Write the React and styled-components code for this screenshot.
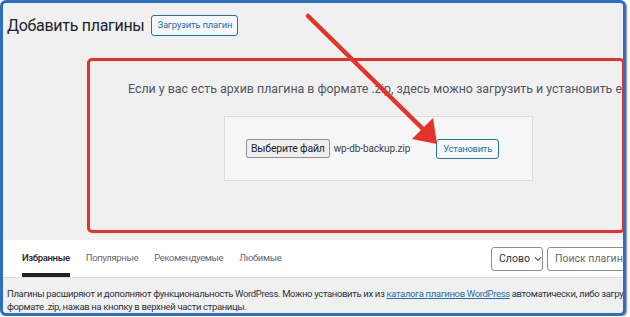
import React from 'react'
import styled, { createGlobalStyle } from 'styled-components'

const GlobalStyle = createGlobalStyle`
    html, body {
        margin: 0;
        padding: 0;
        background: #ffffff;
    }
    body {
        font-family: Roboto, "Noto Sans", sans-serif;
    }
`

const tabs = ['Избранные', 'Популярные', 'Рекомендуемые', 'Любимые']

function App() {
    return (
        <>
            <GlobalStyle />
            <Frame>
                <Header>
                    <Title>Добавить плагины</Title>
                    <OutlineButton>Загрузить плагин</OutlineButton>
                </Header>

                <UploadSection>
                    <UploadHint>
                        Если у вас есть архив плагина в формате .zip, здесь можно загрузить и установить его.
                    </UploadHint>
                    <UploadBox>
                        <FileButton>Выберите файл</FileButton>
                        <FileName>wp-db-backup.zip</FileName>
                        <OutlineButton $small>Установить</OutlineButton>
                    </UploadBox>
                </UploadSection>

                <TabBar>
                    <Tabs>
                        {tabs.map((t, i) => (
                            <Tab key={t} $active={i === 0}>{t}</Tab>
                        ))}
                    </Tabs>
                    <SearchControls>
                        <Select>
                            Слово
                            <svg width="9" height="6" viewBox="0 0 9 6">
                                <path d="M1 1l3.5 3.5L8 1" fill="none" stroke="#50575e" strokeWidth="1.3" />
                            </svg>
                        </Select>
                        <SearchInput>Поиск плагинов...</SearchInput>
                    </SearchControls>
                </TabBar>

                <Description>
                    <Line>
                        Плагины расширяют и дополняют функциональность WordPress. Можно установить их из{' '}
                        <Link>каталога плагинов WordPress</Link> автоматически, либо загрузить плагин в
                    </Line>
                    <Line>формате .zip, нажав на кнопку в верхней части страницы.</Line>
                </Description>

                {/* red annotation arrow drawn over the screenshot */}
                <Arrow width="630" height="317" viewBox="0 0 630 317">
                    <line x1="308" y1="16" x2="424" y2="130" stroke="#e5322b" strokeWidth="4.5" strokeLinecap="round" />
                    <polygon points="433,118 412,139 437,144" fill="#e5322b" />
                </Arrow>
            </Frame>
        </>
    )
}

const Frame = styled.div`
    position: relative;
    box-sizing: border-box;
    width: 626px;
    height: 316px;
    border: 3px solid #2b6fc0;
    border-radius: 6px;
    box-shadow: 1px 1px 2px rgba(0, 0, 0, 0.45);
    background: #f0f0f1;
    overflow: hidden;
    display: flex;
    flex-direction: column;

    & > * {
        flex-shrink: 0;
    }
`

const Header = styled.div`
    display: flex;
    align-items: center;
    gap: 7px;
    padding: 11px 0 0 4px;
    height: 22px;
`

const Title = styled.h1`
    margin: 0;
    font-size: 16px;
    letter-spacing: -0.3px;
    font-weight: 400;
    color: #1d2327;
`

const OutlineButton = styled.button`
    box-sizing: border-box;
    height: ${p => (p.$small ? '20px' : '21px')};
    padding: 0 ${p => (p.$small ? '6px' : '5px')};
    border: 1px solid #2271b1;
    border-radius: 3px;
    background: #f6f7f7;
    color: #2271b1;
    font-family: Roboto, sans-serif;
    font-size: 9.5px;
    letter-spacing: ${p => (p.$small ? '-0.3px' : '-0.2px')};
    line-height: 18px;
    white-space: nowrap;
`

const UploadSection = styled.div`
    box-sizing: border-box;
    margin: 22px -2px 0 84px;
    height: 175px;
    border: 3px solid #e5322b;
    border-radius: 5px;
    padding: 18px 0 0 38px;
`

const UploadHint = styled.p`
    margin: 0;
    font-size: 12.4px;
    line-height: 20px;
    color: #50575e;
    white-space: nowrap;
`

const UploadBox = styled.div`
    box-sizing: border-box;
    margin: 17px 0 0 96px;
    width: 309px;
    height: 65px;
    background: #f6f6f6;
    border: 1px solid #dcdcde;
    display: flex;
    align-items: center;
    padding-left: 21px;
    white-space: nowrap;
`

const FileButton = styled.span`
    box-sizing: border-box;
    height: 19px;
    padding: 0 4px;
    border: 1px solid #8c8f94;
    border-radius: 2px;
    background: #efefef;
    color: #1d2327;
    font-size: 10.5px;
    letter-spacing: -0.2px;
    line-height: 17px;
`

const FileName = styled.span`
    margin: 0 26px 0 4px;
    font-size: 10px;
    letter-spacing: -0.1px;
    color: #3c434a;
`

const TabBar = styled.div`
    margin-top: 7px;
    height: 37px;
    background: #ffffff;
    border-bottom: 1px solid #dcdcde;
    display: flex;
    justify-content: space-between;
    align-items: stretch;
`

const Tabs = styled.div`
    display: flex;
    padding-left: 19px;
    gap: 16px;
`

const Tab = styled.div`
    display: flex;
    align-items: center;
    padding-top: 2px;
    font-size: 9.5px;
    letter-spacing: -0.35px;
    color: ${p => (p.$active ? '#1d2327' : '#646970')};
    font-weight: ${p => (p.$active ? 500 : 400)};
    border-bottom: 4px solid ${p => (p.$active ? '#1d2327' : 'transparent')};
`

const SearchControls = styled.div`
    display: flex;
    align-items: center;
    gap: 4px;
    margin-right: -32px;
`

const Select = styled.div`
    box-sizing: border-box;
    height: 24px;
    width: 52px;
    display: flex;
    align-items: center;
    gap: 4px;
    padding-left: 7px;
    border: 1px solid #8c8f94;
    border-radius: 3px;
    font-size: 10.5px;
    color: #2c3338;
`

const SearchInput = styled.div`
    box-sizing: border-box;
    height: 24px;
    width: 108px;
    padding-left: 7px;
    display: flex;
    align-items: center;
    border: 1px solid #8c8f94;
    border-radius: 3px;
    font-size: 10.5px;
    color: #646970;
    white-space: nowrap;
`

const Description = styled.div`
    padding: 9px 0 0 4px;
`

const Line = styled.p`
    margin: 0;
    font-size: 9.5px;
    letter-spacing: -0.35px;
    line-height: 13px;
    color: #2c3338;
    white-space: nowrap;
`

const Link = styled.a`
    color: #2271b1;
    text-decoration: underline;
`

const Arrow = styled.svg`
    position: absolute;
    left: -3px;
    top: -3px;
    pointer-events: none;
`

export default App
